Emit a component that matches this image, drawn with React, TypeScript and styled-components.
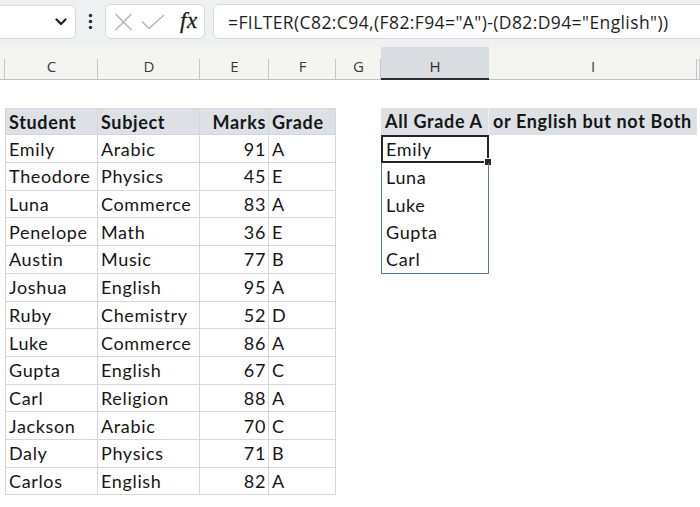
import React from "react";
import styled, { createGlobalStyle, css } from "styled-components";

const Global = createGlobalStyle`
  html, body { margin: 0; padding: 0; background: #ffffff; }
  body { width: 700px; height: 507px; overflow: hidden; font-family: "Lato", "Open Sans", sans-serif; }
`;

const COLS = "5px 93px 102px 69px 67px 45px 108px 208px 1fr";

const Page = styled.div`
  display: flex;
  flex-direction: column;
  width: 700px;
  height: 507px;
  background: #ffffff;
`;

/* ---------- toolbar ---------- */
const Toolbar = styled.div`
  display: flex;
  align-items: center;
  height: 47px;
  padding-bottom: 4px;
  box-sizing: border-box;
  background: #eef0f2;
`;

const NameBox = styled.div`
  width: 76px;
  height: 34px;
  box-sizing: border-box;
  display: flex;
  align-items: center;
  justify-content: flex-end;
  padding-right: 8px;
  background: #ffffff;
  border: 1px solid #d6d8db;
  border-left: none;
  border-radius: 0 6px 6px 0;
`;

const Dots = styled.div`
  width: 29px;
  display: flex;
  justify-content: center;
`;

const ButtonGroup = styled.div`
  width: 100px;
  height: 35px;
  box-sizing: border-box;
  display: flex;
  align-items: center;
  padding: 0 5px 0 6px;
  background: #ffffff;
  border: 1px solid #d6d8db;
  border-radius: 6px;
`;

const IconSlot = styled.span<{ $w: number }>`
  width: ${(p) => p.$w}px;
  display: flex;
  align-items: center;
  justify-content: center;
`;

const Fx = styled.span`
  font-family: "Liberation Serif", "DejaVu Serif", serif;
  font-style: italic;
  font-size: 23px;
  color: #1a1a1a;
  line-height: 1;
  letter-spacing: 0.5px;
  margin-left: 8px;
  margin-top: -3px;
  -webkit-text-stroke: 0.3px #1a1a1a;
`;

const FormulaBox = styled.div`
  flex: 1;
  height: 35px;
  box-sizing: border-box;
  margin-left: 8px;
  margin-right: -10px;
  display: flex;
  align-items: center;
  padding-left: 14px;
  background: #ffffff;
  border: 1px solid #d6d8db;
  border-radius: 6px;
  font-family: "Open Sans", "Noto Sans", sans-serif;
  font-size: 17.5px;
  letter-spacing: 0.4px;
  color: #1e1e1e;
  white-space: nowrap;
  overflow: hidden;
`;

/* ---------- column headers ---------- */
const ColHeaders = styled.div`
  display: grid;
  grid-template-columns: ${COLS};
  height: 33px;
  box-sizing: border-box;
  background: #f4f4f1;
  border-bottom: 1px solid #bfc1c4;
`;

const ColHead = styled.div<{ $selected?: boolean }>`
  display: flex;
  align-items: center;
  justify-content: center;
  padding-top: 6px;
  box-sizing: border-box;
  font-family: "Open Sans", "Noto Sans", sans-serif;
  font-size: 15px;
  color: #3a3a3a;
  background: linear-gradient(#c4c6c9, #c4c6c9) right bottom / 1px 62% no-repeat,
    #f4f4f1;
  ${(p) =>
    p.$selected &&
    css`
      background: #d9dce1;
      border-bottom: 2px solid #2b2b2b;
      margin-bottom: -1px;
      color: #2b2b2b;
    `}
`;

/* ---------- sheet ---------- */
const Sheet = styled.div`
  display: grid;
  grid-template-columns: ${COLS};
  grid-auto-rows: 27.7px;
  font-size: 18px;
  letter-spacing: 0.65px;
  color: #161616;
`;

const Blank = styled.div``;

type CellProps = {
  $head?: boolean;
  $first?: boolean;
  $top?: boolean;
  $num?: boolean;
};

const Cell = styled.div<CellProps>`
  display: flex;
  align-items: center;
  box-sizing: border-box;
  padding: 0 3px 0 3px;
  white-space: nowrap;
  border-right: 1px solid #d3d7dd;
  border-bottom: 1px solid #d3d7dd;
  ${(p) => p.$first && css`border-left: 1px solid #d3d7dd;`}
  ${(p) => p.$top && css`border-top: 1px solid #d3d7dd;`}
  ${(p) => p.$num && css`justify-content: flex-end; padding-right: 2px;`}
  ${(p) =>
    p.$head &&
    css`
      background: #dde1e6;
      font-weight: 700;
    `}
`;

const ResultHead = styled.div<{ $divider?: boolean }>`
  display: flex;
  align-items: center;
  box-sizing: border-box;
  padding: 0 0 0 4px;
  white-space: nowrap;
  font-weight: 700;
  background: #dde1e6;
  border-bottom: 1px solid #dde1e6;
  ${(p) => p.$divider && css`border-right: 1px solid #eceef1;`}
`;

const Spill = styled.div<{ $top?: boolean; $bottom?: boolean; $selected?: boolean }>`
  position: relative;
  display: flex;
  align-items: center;
  box-sizing: border-box;
  padding: 0 0 0 4px;
  border-left: 1px solid #5a78a4;
  border-right: 1px solid #5a78a4;
  ${(p) => p.$top && css`border-top: 1px solid #5a78a4;`}
  ${(p) => p.$bottom && css`border-bottom: 1px solid #5a78a4;`}
  ${(p) =>
    p.$selected &&
    css`
      border: 2px solid #262626;
      padding-left: 3px;
      &::after {
        content: "";
        position: absolute;
        right: -5px;
        bottom: -5px;
        width: 6px;
        height: 6px;
        background: #262626;
        border: 1px solid #ffffff;
      }
    `}
`;

const rows: [string, string, number, string][] = [
  ["Emily", "Arabic", 91, "A"],
  ["Theodore", "Physics", 45, "E"],
  ["Luna", "Commerce", 83, "A"],
  ["Penelope", "Math", 36, "E"],
  ["Austin", "Music", 77, "B"],
  ["Joshua", "English", 95, "A"],
  ["Ruby", "Chemistry", 52, "D"],
  ["Luke", "Commerce", 86, "A"],
  ["Gupta", "English", 67, "C"],
  ["Carl", "Religion", 88, "A"],
  ["Jackson", "Arabic", 70, "C"],
  ["Daly", "Physics", 71, "B"],
  ["Carlos", "English", 82, "A"],
];

const result = ["Emily", "Luna", "Luke", "Gupta", "Carl"];

const ChevronIcon = () => (
  <svg width="12" height="8" viewBox="0 0 12 8">
    <path d="M1.5 1.5 L6 6 L10.5 1.5" fill="none" stroke="#222" strokeWidth="2.2" strokeLinecap="round" strokeLinejoin="round" />
  </svg>
);

const DotsIcon = () => (
  <svg width="5" height="17" viewBox="0 0 5 17">
    <circle cx="2.5" cy="2.5" r="1.8" fill="#333" />
    <circle cx="2.5" cy="8.5" r="1.8" fill="#333" />
    <circle cx="2.5" cy="14.5" r="1.8" fill="#333" />
  </svg>
);

const CancelIcon = () => (
  <svg width="19" height="18" viewBox="0 0 19 18">
    <path d="M1.5 1 L17.5 17 M17.5 1 L1.5 17" stroke="#b3b3b3" strokeWidth="1.4" fill="none" />
  </svg>
);

const CheckIcon = () => (
  <svg width="24" height="16" viewBox="0 0 24 16">
    <path d="M1 7.5 L8 14.5 L23 1" stroke="#b3b3b3" strokeWidth="1.4" fill="none" />
  </svg>
);

export default function App() {
  const letters = ["", "C", "D", "E", "F", "G", "H", "I", ""];
  return (
    <Page>
      <Global />
      <Toolbar>
        <NameBox>
          <ChevronIcon />
        </NameBox>
        <Dots>
          <DotsIcon />
        </Dots>
        <ButtonGroup>
          <IconSlot $w={22}>
            <CancelIcon />
          </IconSlot>
          <IconSlot $w={38}>
            <CheckIcon />
          </IconSlot>
          <Fx>fx</Fx>
        </ButtonGroup>
        <FormulaBox>=FILTER(C82:C94,(F82:F94="A")-(D82:D94="English"))</FormulaBox>
      </Toolbar>

      <ColHeaders>
        {letters.map((l, i) => (
          <ColHead key={i} $selected={l === "H"}>
            {l}
          </ColHead>
        ))}
      </ColHeaders>

      <Sheet>
        {letters.map((_, i) => (
          <Blank key={"b" + i} />
        ))}

        <Blank />
        <Cell $head $first $top>Student</Cell>
        <Cell $head $top>Subject</Cell>
        <Cell $head $top $num>Marks</Cell>
        <Cell $head $top>Grade</Cell>
        <Blank />
        <ResultHead $divider>All Grade A</ResultHead>
        <ResultHead>or English but not Both</ResultHead>
        <Blank />

        {rows.map(([name, subj, mark, grade], r) => (
          <React.Fragment key={name + r}>
            <Blank />
            <Cell $first>{name}</Cell>
            <Cell>{subj}</Cell>
            <Cell $num>{mark}</Cell>
            <Cell>{grade}</Cell>
            <Blank />
            {r < result.length ? (
              <Spill $top={r === 0} $bottom={r === result.length - 1} $selected={r === 0}>
                {result[r]}
              </Spill>
            ) : (
              <Blank />
            )}
            <Blank />
            <Blank />
          </React.Fragment>
        ))}
      </Sheet>
    </Page>
  );
}
